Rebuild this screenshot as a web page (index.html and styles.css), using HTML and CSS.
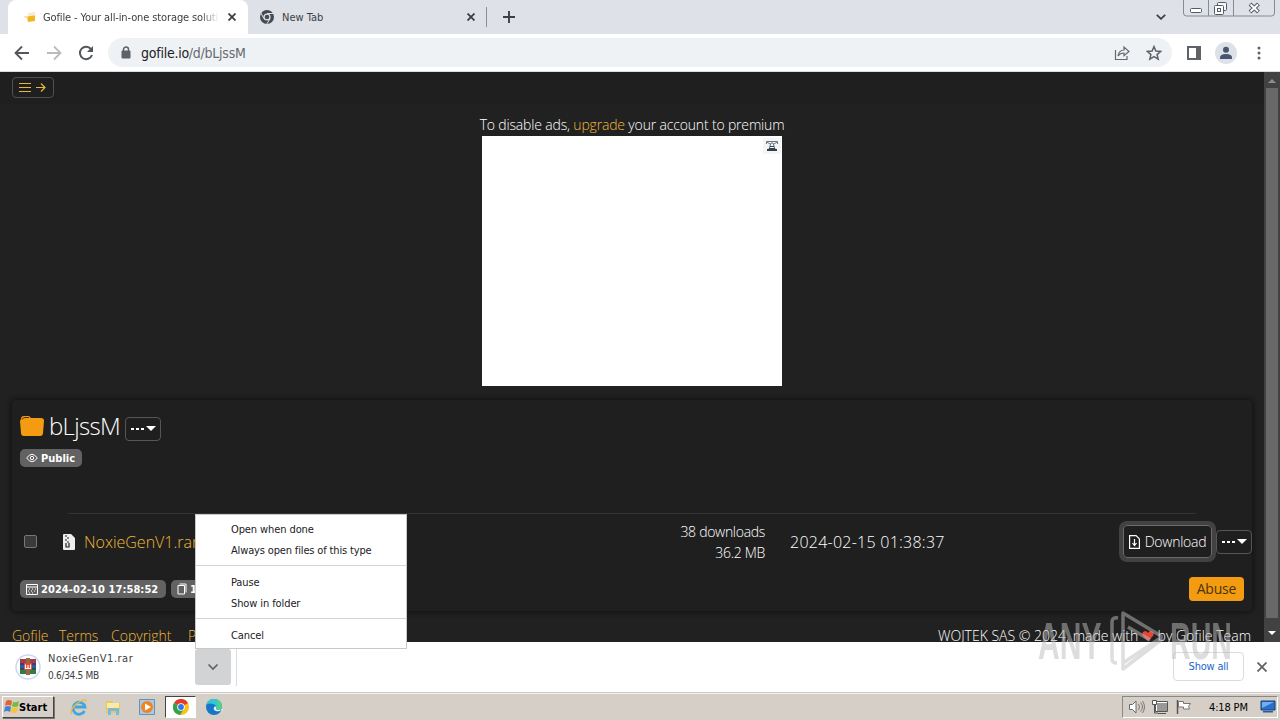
FILE: index.html
```html
<!DOCTYPE html>
<html lang="en">
<head>
<meta charset="UTF-8">
<meta name="viewport" content="width=device-width, initial-scale=1.0">
<title>Gofile - Your all-in-one storage solution</title>
<link rel="stylesheet" href="styles.css">
</head>
<body>
<div class="tabstrip">
    <div class="tab active">
        <svg class="favicon" viewBox="0 0 16 16" width="16" height="16"><path d="M5 4l7-1v5H5z" fill="#f6ead0"/><path d="M4 7.500l8-1V12l-7 1z" fill="#f2b51d"/><path d="M1 7h4v2H2z" fill="#fbdca0"/></svg>
        <span class="tab-title fade">Gofile - Your all-in-one storage solution</span>
        <svg class="tab-close" viewBox="0 0 8 8" width="8" height="8"><path d="M.5.5l7 7M7.500.5l-7 7" stroke="#3c4043" stroke-width="1.8"/></svg>
    </div>
    <div class="tab">
        <svg class="favicon" viewBox="0 0 16 16" width="16" height="16"><circle cx="8" cy="8" r="7" fill="#454a53"/><circle cx="8" cy="8" r="3.600" fill="#dee1e8"/><circle cx="8" cy="8" r="2.300" fill="#454a53"/><path d="M8 4.500h6.500M5 9.700L1.800 4M11 9.800L7.800 15" stroke="#dee1e8"/></svg>
        <span class="tab-title">New Tab</span>
        <svg class="tab-close" viewBox="0 0 8 8" width="8" height="8"><path d="M.5.5l7 7M7.500.5l-7 7" stroke="#3c4043" stroke-width="1.8"/></svg>
    </div>
    <div class="tab-divider"></div>
    <svg class="new-tab" viewBox="0 0 12 12" width="12" height="12"><path d="M6 0v12M0 6h12" stroke="#3c4043" stroke-width="1.900"/></svg>
    <svg class="tab-search" viewBox="0 0 10 6" width="10" height="6"><path d="M.8.8L5 4.800 9.200.8" fill="none" stroke="#3c4043" stroke-width="1.800"/></svg>
    <div class="window-buttons">
        <svg viewBox="0 0 92 17" width="92" height="17"><path d="M.5 0v13q0 3 3 3h85q3 0 3-3V0M25.500 0v16M50.500 0v16" fill="none" stroke="#858a94"/><rect x="7.500" y="8.500" width="11" height="4" rx="1" fill="#fff" stroke="#555b65"/><rect x="34.500" y="2.500" width="9" height="8" rx="1" fill="#f6f7f9" stroke="#555b65"/><rect x="31.500" y="5.500" width="9" height="9" rx="1" fill="#fff" stroke="#555b65"/><rect x="34.500" y="8.500" width="3" height="3" fill="none" stroke="#555b65"/><path d="M67 4l8.500 8M75.500 4L67 12" stroke="#555b65" stroke-width="4"/><path d="M67.500 4.500l7.500 7M75 4.500l-7.500 7" stroke="#fff" stroke-width="2"/></svg>
    </div>
</div>

<div class="toolbar">
    <svg class="nav-icon" viewBox="0 0 16 16" width="16" height="16"><path d="M15 8H2M8 1.500L1.500 8 8 14.500" fill="none" stroke="#53565a" stroke-width="1.800"/></svg>
    <svg class="nav-icon" viewBox="0 0 16 16" width="16" height="16"><path d="M1 8h13M8 1.500L14.500 8 8 14.500" fill="none" stroke="#b9bbbe" stroke-width="1.800"/></svg>
    <svg class="nav-icon" viewBox="0 0 16 16" width="16" height="16"><path d="M13.300 4.500A6.200 6.200 0 1 0 14 10" fill="none" stroke="#53565a" stroke-width="2"/><path d="M15 1v6H9z" fill="#53565a"/></svg>
    <div class="omnibox">
        <svg class="lock" viewBox="0 0 10 13" width="10" height="13"><rect y="4.500" x=".5" width="9" height="8" rx="1" fill="#5f6368"/><path d="M2.500 5V3.500a2.500 2.500 0 0 1 5 0V5" fill="none" stroke="#5f6368" stroke-width="1.500"/></svg>
        <span class="url">gofile.io<span class="path">/d/bLjssM</span></span>
        <svg class="share" viewBox="0 0 16 16" width="16" height="16"><path d="M1.500 5v9.500H13V11" fill="none" stroke="#66696e" stroke-width="1.200"/><path d="M4 11q1-6 6-6V2l5 4.500-5 4.300V8Q6 8 4 11z" fill="none" stroke="#66696e" stroke-width="1.200"/></svg>
        <svg viewBox="0 0 16 16" width="16" height="16"><path d="M8 1.600l1.900 4.400 4.800.4-3.600 3.200 1.100 4.600L8 11.700l-4.200 2.500 1.100-4.600L1.300 6.400 6.100 6z" fill="none" stroke="#5f6368" stroke-width="1.500"/></svg>
    </div>
    <svg class="side-panel" viewBox="0 0 14 14" width="14" height="14"><path d="M1 1h12v12H1z" fill="none" stroke="#5f6368" stroke-width="2"/><path d="M9 0h5v14H9z" fill="#5f6368"/></svg>
    <svg class="avatar" viewBox="0 0 22 22" width="22" height="22"><circle cx="11" cy="11" r="11" fill="#dde1e8"/><circle cx="11" cy="7.800" r="3" fill="#4a5570"/><path d="M5 17v-1.500q0-3.500 6-3.500t6 3.500V17z" fill="#4a5570"/></svg>
    <svg class="kebab" viewBox="0 0 4 14" width="4" height="14"><circle cx="2" cy="2" r="1.500" fill="#5f6368"/><circle cx="2" cy="7" r="1.500" fill="#5f6368"/><circle cx="2" cy="12" r="1.500" fill="#5f6368"/></svg>
</div>

<div class="viewport">
    <div class="page">
        <div class="navbar">
            <div class="menu-button">
                <svg viewBox="0 0 30 11" width="30" height="11"><path d="M0 1.500h12M0 5.500h12M0 9.500h12M17 5.500h9M22 1.500l4 4-4 4" fill="none" stroke="#e8b73a" stroke-width="1.200"/></svg>
            </div>
        </div>
        <div class="ads">
            <p class="ads-text">To disable ads, <a>upgrade</a> your account to premium</p>
            <div class="ad">
                <svg viewBox="0 0 18 16" width="18" height="16"><path d="M0 0h18v16H0z" fill="#f3f5f7"/><path d="M3.500 6V3.500h11V6M4 4l3 2M14 4l-3 2M6 11l2-6h2l2 6" fill="none" stroke="#6c7580"/><path d="M4 11h10v2H4z" fill="#33414d"/><path d="M7 8.500h4M6 10.500h6" stroke="#33414d"/></svg>
            </div>
        </div>
        <div class="card">
            <div class="card-title">
                <svg viewBox="0 0 24 20" width="24" height="20"><path d="M1 3q0-3 3-3h5l2 2h10q3 0 3 3l-1 12q0 3-3 3H4q-3 0-3-3L0 5z" fill="#f39c12"/><path d="M2 3.500q1-2 3-2h4" fill="none" stroke="#40300f"/></svg>
                <h1>bLjssM</h1>
                <div class="dots-button"><i></i></div>
            </div>
            <span class="badge public">
                <svg viewBox="0 0 12 10" width="12" height="10"><path d="M.7 5Q6-2.500 11.300 5 6 12.500.7 5z" fill="none" stroke="#fff"/><circle cx="6" cy="5" r="1.700" fill="none" stroke="#fff"/></svg>Public
            </span>
            <hr>
            <div class="file-row">
                <span class="checkbox"></span>
                <svg class="zip" viewBox="0 0 12 16" width="12" height="16"><path d="M1 0h7l4 4v11q0 1-1 1H1q-1 0-1-1V1q0-1 1-1z" fill="#eee"/><path d="M2 2h2M4 4h2M2 6h2M4 8h2M3 9v4h3V9" fill="none" stroke="#222" stroke-width="1.200"/></svg>
                <a class="file-name">NoxieGenV1.rar</a>
                <div class="file-stats">38 downloads<br>36.2 MB</div>
                <div class="file-date">2024-02-15 01:38:37</div>
                <div class="download-button">
                    <svg viewBox="0 0 11 14" width="11" height="14"><path d="M.6.6h6.500l3.300 3.300v9.500H.6zM5.500 4v6M3.500 8l2 2.500 2-2.500" fill="none" stroke="#fff" stroke-width="1.200"/></svg>
                    <span>Download</span>
                </div>
                <div class="dots-button"><i></i></div>
            </div>
            <div class="badge-row">
                <span class="badge date">
                    <svg viewBox="0 0 12 11" width="12" height="11"><path d="M.5.5h11v10H.5zM.5 3h11M3 5h1M6 5h1M9 5h1M2 7h1M5 7h1M8 7h1M3 9h1M6 9h1" fill="none" stroke="#fff"/></svg>2024-02-10 17:58:52
                </span>
                <span class="badge count">
                    <svg viewBox="0 0 10 12" width="10" height="12"><path d="M2.500 1h6.500v8.500M1 2.500h6.500V11H1z" fill="none" stroke="#fff"/></svg>1 files
                </span>
                <span class="abuse">Abuse</span>
            </div>
        </div>
        <div class="footer">
            <a class="f1">Gofile</a><a class="f2">Terms</a><a class="f3">Copyright</a><a>Privacy</a>
            <span class="credits">WOJTEK SAS © 2024, made with <svg viewBox="0 0 12 10" width="12" height="10"><path d="M6 10L1 5Q-1 1 3 0q2 0 3 2 1-2 3-2 4 1 2 5z" fill="#e74536"/></svg> by Gofile Team</span>
        </div>
    </div>
    <div class="scrollbar">
        <svg viewBox="0 0 16 16" width="16" height="16"><path d="M4 11l4-4 4 4z" fill="#8f8f8f"/></svg>
        <div class="thumb"></div>
        <svg viewBox="0 0 16 24" width="16" height="24"><path d="M4 13h8l-4 4z" fill="#fff"/></svg>
    </div>
</div>

<div class="shelf">
    <svg class="rar" viewBox="0 0 26 26" width="26" height="26"><circle cx="13" cy="13" r="12" fill="#fff" stroke="#c9d8f2" stroke-width="1.500"/><path d="M5 5h16v5H5z" fill="#a33b52"/><path d="M5 10h16v5H5z" fill="#3158a4"/><path d="M5 15h16v5H5z" fill="#327e43"/><path d="M11 4h4v17h-4z" fill="#9b673c"/><path d="M5 10h16M5 15h16" stroke="#302e44"/><path d="M9 9h8v7H9z" fill="#d94a35"/><path d="M10.500 10.500v4h5v-4M13 11v3" fill="none" stroke="#fff" stroke-width="1.200"/></svg>
    <div class="download-text">
        <div class="download-name">NoxieGenV1.rar</div>
        <div class="download-size">0.6/34.5 MB</div>
    </div>
    <div class="shelf-arrow"><svg viewBox="0 0 12 8" width="12" height="8"><path d="M1.500 1.500L6 6l4.500-4.500" fill="none" stroke="#5f6368" stroke-width="1.700"/></svg></div>
    <div class="shelf-divider"></div>
    <div class="show-all">Show all</div>
    <svg class="shelf-close" viewBox="0 0 10 10" width="10" height="10"><path d="M.5.5l9 9M9.500.5l-9 9" stroke="#5f6368" stroke-width="1.800"/></svg>
</div>

<div class="taskbar">
    <div class="start">
        <svg viewBox="0 0 16 16" width="16" height="16"><path d="M3 2q3-2 6 0L8 7Q5 5 2 7z" fill="#e5612f"/><path d="M10 3q3 1 6-1l-1 5q-3 2-6 0z" fill="#76b943"/><path d="M2 8q3-2 6 0l-1 5q-3-2-6 0z" fill="#4382d2"/><path d="M9 8q3 2 6 0l-1 5q-3 2-6 0z" fill="#f6c533"/></svg>Start
    </div>
    <div class="quick">
        <svg viewBox="0 0 18 18" width="18" height="18"><path d="M14.500 13A6 6 0 1 1 15 9H5" fill="none" stroke="#42a6dd" stroke-width="2.800"/><path d="M2 16Q-1 12 7 5.500 16-1 16 4" fill="none" stroke="#edbb45" stroke-width="1.300"/></svg>
        <svg viewBox="0 0 18 18" width="18" height="18"><path d="M2 3h6l1 2h7v10H2z" fill="#e9c862"/><path d="M3 5h12v5H3z" fill="#faeaa4"/><path d="M4 10h11v7h-3v-4H7v4H4z" fill="#79b9d9"/></svg>
        <svg viewBox="0 0 18 18" width="18" height="18"><path d="M1.500 1.500h15v15h-15z" fill="#a9cae6" stroke="#5f94c0"/><circle cx="9" cy="9" r="6" fill="#ef8421"/><path d="M7 5.500l6 3.500-6 3.500z" fill="#fff"/></svg>
        <div class="task-active"><svg viewBox="0 0 16 16" width="16" height="16"><circle cx="8" cy="8" r="8" fill="#fbc116"/><path d="M8 8L1 4a8 8 0 0 1 14 0z" fill="#e33b2e"/><path d="M8 8L1 4a8 8 0 0 0 6 12l4-6z" fill="#31a350"/><circle cx="8" cy="8" r="3.800" fill="#fff"/><circle cx="8" cy="8" r="2.900" fill="#3477e4"/></svg></div>
        <svg viewBox="0 0 18 18" width="18" height="18"><circle cx="9" cy="9" r="8" fill="#1676c8"/><path d="M1.500 6.500A8 8 0 0 1 17 8q0 4-4 4l-2-1q1-4-3-5-3-1-6.500.5z" fill="#36c5d1"/><path d="M11 1.500q6 2 6 7 0 3-3 3.500l-3-1q3-4 0-9.500z" fill="#56cf86"/><path d="M10 8q-3 4 1 5 3 1 5-1l1.500 1-1 2L18 11l-4 1q-3 0-3-1.500 1-1-1-2.500z" fill="#eaf7fb"/></svg>
    </div>
    <div class="tray">
        <svg viewBox="0 0 18 16" width="18" height="16"><path d="M1.500 5.500h3L8 2v12l-3.500-3.500h-3z" fill="#fff" stroke="#696969"/><path d="M10.500 5q2 3 0 6M12.500 3.500q4 4.500 0 9M14.500 2q4 6 0 12" fill="none" stroke="#777"/></svg>
        <svg viewBox="0 0 18 16" width="18" height="16"><path d="M4.500 3.500h11v9h-11z" fill="#999" stroke="#fff"/><path d="M3.500 2.500h12v10h-12zM6 14.500h8M2.500 6v8H6" fill="none" stroke="#555"/><path d="M.5 1.500h4v4h-4z" fill="#fff" stroke="#555"/></svg>
        <svg viewBox="0 0 18 16" width="18" height="16"><path d="M1.500 1v14" stroke="#555" stroke-width="1.500"/><path d="M2.500 2.500h5v2h7l-2 3 1 2.500h-6V8h-5z" fill="#fff" stroke="#777"/></svg>
        <span class="clock">4:18 PM</span>
        <svg viewBox="0 0 16 14" width="16" height="14"><path d="M1 1h14v9H1z" fill="#2870c9" stroke="#173f7c"/><path d="M2 2h12L2 8z" fill="#74aef0"/><path d="M3 11h10v1.500H3z" fill="#31599a"/></svg>
    </div>
</div>

<!-- download item menu, opens above the shelf -->
<div class="context-menu">
    <div class="group"><div class="item">Open when done</div><div class="item wide">Always open files of this type</div></div>
    <div class="group"><div class="item">Pause</div><div class="item">Show in folder</div></div>
    <div class="group"><div class="item">Cancel</div></div>
</div>

<div class="watermark">
    <div class="any"><span>ANY</span></div>
    <svg viewBox="0 0 60 64" width="60" height="64"><path d="M15 3l38 23v4L15 59V3zM10 8q-6-1-6 4v37q0 4 5 4M20 17l22 13M15 59v-6l36-24" fill="none" stroke="#bebebe" stroke-width="3.500" stroke-linejoin="round"/></svg>
    <div class="run"><span>RUN</span></div>
</div>
</body>
</html>
```
FILE: styles.css
```css
* {
    box-sizing: border-box;
}
body {
    margin: 0;
    width: 1280px;
    height: 720px;
    overflow: hidden;
    position: relative;
    display: flex;
    flex-direction: column;
    font-family: "DejaVu Sans Condensed", "DejaVu Sans", sans-serif;
    font-stretch: condensed;
    font-size: 11px;
    white-space: nowrap;
}
svg {
    display: block;
    flex: none;
}

/* browser */
.tabstrip {
    height: 34px;
    flex: none;
    display: flex;
    align-items: center;
    background: #dee1e8;
}
.tab {
    width: 238px;
    height: 34px;
    display: flex;
    align-items: center;
    padding: 0 11px 0 11px;
    color: #3c4043;
}
.tab.active {
    width: 240px;
    margin-left: 8px;
    padding: 0 12px 0 15px;
    background: #fff;
    border-radius: 8px 8px 0 0;
}
.favicon {
    margin-right: 7px;
}
.tab.active .favicon {
    margin-right: 4px;
}
.tab-title {
    flex: 1;
    overflow: hidden;
    margin-right: 9px;
}
.fade {
    letter-spacing: -0.12px;
    -webkit-mask-image: linear-gradient(to right, #000 90%, transparent);
    mask-image: linear-gradient(to right, #000 90%, transparent);
}
.tab-divider {
    width: 1px;
    height: 20px;
    background: #8a8d93;
}
.new-tab {
    margin-left: 16px;
}
.tab-search {
    margin-left: auto;
    margin-right: 17px;
}
.window-buttons {
    width: 97px;
    align-self: flex-start;
}
.toolbar {
    height: 38px;
    flex: none;
    display: flex;
    align-items: center;
    background: #fff;
    border-bottom: 1px solid #d9dce0;
    padding-left: 14px;
}
.nav-icon {
    margin-right: 16px;
}
.omnibox {
    width: 1064px;
    height: 29px;
    margin-left: -2px;
    display: flex;
    align-items: center;
    background: #eff2f5;
    border-radius: 15px;
    padding: 0 10px 0 13px;
}
.url {
    flex: 1;
    margin-left: 10px;
    font-size: 14px;
    letter-spacing: -0.25px;
    color: #202124;
}
.path {
    color: #676a6f;
}
.share {
    margin-right: 16px;
}
.side-panel {
    margin-left: 15px;
}
.avatar {
    margin-left: 14px;
}
.kebab {
    margin-left: 20px;
}

/* gofile */
.viewport {
    height: 570px;
    flex: none;
    display: flex;
    color: #fff;
    background: #212121;
    font-family: "Open Sans", sans-serif;
    font-stretch: normal;
    font-weight: 300;
    font-size: 14px;
}
.page {
    width: 1264px;
    overflow: hidden;
}
.page a {
    color: #f0b838;
}
.navbar {
    height: 32px;
    padding: 5px 12px;
    background: #1f1f1f;
}
.menu-button {
    width: 42px;
    height: 21px;
    display: flex;
    align-items: center;
    padding-left: 6px;
    border: 1px solid #505050;
    border-radius: 4px;
}
.ads {
    display: flex;
    flex-direction: column;
    align-items: center;
    padding-top: 10px;
}
.ads-text {
    margin: 0 0 1px;
    line-height: 21px;
    letter-spacing: -0.17px;
}
.ad {
    width: 300px;
    height: 250px;
    display: flex;
    justify-content: flex-end;
    padding: 2px 1px;
    background: #fff;
}
.card {
    width: 1240px;
    height: 211px;
    margin: 14px 0 0 12px;
    padding: 13px 0 0 8px;
    background: #1f1f1f;
    border-radius: 4px;
    box-shadow: 0 0 5px 1px #111;
}
.card-title {
    display: flex;
    align-items: center;
    height: 26px;
}
.card-title h1 {
    margin: 0 5px 0 5px;
    width: 71px;
    font-size: 24px;
    font-weight: 300;
    line-height: 26px;
    letter-spacing: -0.7px;
}
.card-title .dots-button {
    margin-top: 5px;
}
.dots-button {
    width: 36px;
    height: 24px;
    flex: none;
    display: flex;
    align-items: center;
    justify-content: center;
    gap: 2px;
    border: 1px solid #565656;
    border-radius: 4px;
}
.dots-button i {
    width: 13px;
    height: 2px;
    background: repeating-linear-gradient(to right, #fff 0 3px, transparent 3px 5px);
}
.dots-button::after {
    content: "";
    border: 5px solid transparent;
    border-top: 5px solid #fff;
    border-bottom: 0;
}
.badge {
    height: 18px;
    display: flex;
    align-items: center;
    gap: 3px;
    padding: 0 6px;
    background: #626262;
    border-radius: 5px;
    font-family: "DejaVu Sans Condensed", "DejaVu Sans", sans-serif;
    font-stretch: condensed;
    font-weight: 700;
    font-size: 11px;
}
.public {
    width: 62px;
    margin-top: 10px;
}
hr {
    margin: 46px 56px 0 48px;
    border: 0;
    border-top: 1px solid #343434;
}
.file-row {
    height: 57px;
    display: flex;
    align-items: center;
    margin-top: -1px;
    font-size: 16px;
}
.checkbox {
    width: 13px;
    height: 13px;
    margin-left: 4px;
    border: 1px solid #777;
    border-radius: 2px;
    background: #3a3a3a;
}
.zip {
    margin-left: 26px;
}
.file-name {
    margin-left: 9px;
}
.file-stats {
    margin-left: auto;
    font-size: 14px;
    line-height: 21px;
    text-align: right;
    letter-spacing: -0.3px;
}
.file-date {
    width: 155px;
    margin-left: 25px;
    margin-right: 178px;
    letter-spacing: 0.25px;
}
.download-button {
    width: 89px;
    height: 33px;
    margin-right: 4px;
    display: flex;
    align-items: center;
    justify-content: center;
    gap: 5px;
    font-size: 14px;
    letter-spacing: -0.25px;
    border: 1px solid #6b6b6b;
    border-radius: 4px;
    box-shadow: 0 0 0 4px #424242;
}
.badge-row {
    display: flex;
    align-items: center;
    height: 24px;
    margin-top: 7px;
}
.date {
    width: 146px;
    margin-right: 5px;
    letter-spacing: 0.07px;
}
.count {
    width: 70px;
}
.abuse {
    width: 55px;
    height: 24px;
    margin-left: auto;
    margin-right: 8px;
    line-height: 24px;
    text-align: center;
    letter-spacing: -0.2px;
    font-weight: 400;
    color: #4a3208;
    background: #f39c12;
    border-radius: 4px;
}
.footer {
    display: flex;
    margin-top: 15px;
    padding: 0 13px 0 12px;
    line-height: 20px;
}
.f1 {
    width: 47px;
}
.f2 {
    width: 52px;
}
.f3 {
    width: 77px;
}
.credits {
    margin-left: auto;
}
.credits svg {
    display: inline-block;
}
.scrollbar {
    width: 16px;
    display: flex;
    flex-direction: column;
    background: #424242;
}
.thumb {
    flex: 1;
    margin: 0 2px;
    background: #686868;
}

/* download shelf */
.shelf {
    height: 51px;
    flex: none;
    display: flex;
    background: #fff;
    border-bottom: 1px solid #c9c9c9;
}
.rar {
    margin: 12px 7px 0 15px;
}
.download-text {
    width: 147px;
    padding-top: 9px;
    color: #3c4043;
}
.download-name {
    line-height: 16px;
    letter-spacing: 0.5px;
}
.download-size {
    font-size: 10px;
    line-height: 17px;
    letter-spacing: -0.3px;
}
.shelf-arrow {
    width: 36px;
    height: 36px;
    margin-top: 7px;
    display: flex;
    align-items: center;
    justify-content: center;
    background: #d2d3d5;
    border-radius: 3px;
}
.shelf-divider {
    width: 1px;
    height: 38px;
    margin: 6px 0 0 5px;
    background: #dadce0;
}
.show-all {
    width: 71px;
    height: 29px;
    margin: 10px 13px 0 auto;
    border: 1px solid #dadce0;
    border-radius: 4px;
    color: #1967c8;
    line-height: 27px;
    text-align: center;
    letter-spacing: -0.2px;
}
.shelf-close {
    margin: 20px 13px 0 0;
}

/* windows taskbar */
.taskbar {
    height: 27px;
    display: flex;
    align-items: center;
    background: #d5cfc7;
    border-top: 1px solid #f4f2ee;
}
.start {
    width: 52px;
    height: 22px;
    margin-left: 2px;
    display: flex;
    align-items: center;
    border: 1px solid;
    border-color: #fff #444 #444 #fff;
    box-shadow: 1px 1px 0 #777;
    font-weight: 700;
}
.quick {
    display: flex;
    align-items: center;
    gap: 16px;
    margin-left: 16px;
}
.task-active {
    width: 31px;
    height: 22px;
    display: flex;
    align-items: center;
    justify-content: center;
    margin: 0 -7px;
    background: #fff;
    border: 1px solid;
    border-color: #444 #fff #fff #444;
}
.tray {
    width: 156px;
    height: 22px;
    margin-left: auto;
    margin-right: 2px;
    display: flex;
    align-items: center;
    gap: 6px;
    padding-left: 5px;
    border: 1px solid;
    border-color: #888 #fff #fff #888;
}
.clock {
    width: 40px;
    margin-left: 9px;
    margin-right: 5px;
    letter-spacing: -0.15px;
}

/* overlays */
.context-menu {
    position: absolute;
    left: 195px;
    top: 514px;
    width: 212px;
    height: 135px;
    background: #fff;
    border: 1px solid #c8c8c8;
    color: #202124;
}
.group {
    height: 51px;
    padding: 4px 0 0 35px;
    border-bottom: 1px solid #d5d5d5;
}
.group + .group {
    height: 53px;
    padding-top: 6px;
}
.group:last-child {
    height: 28px;
    border-bottom: 0;
}
.item {
    height: 21px;
    line-height: 21px;
    letter-spacing: -0.1px;
}
.wide {
    letter-spacing: -0.15px;
}
.watermark {
    position: absolute;
    left: 1038px;
    top: 610px;
    display: flex;
    align-items: center;
    opacity: 0.5;
    color: #bcbcbc;
    font-family: "Liberation Sans", Arial, sans-serif;
    font-stretch: normal;
    font-weight: 700;
    font-size: 51px;
    line-height: 60px;
}
.any {
    width: 70px;
}
.run {
    width: 62px;
    margin-left: 2px;
}
.watermark span {
    display: inline-block;
    transform: scaleX(0.59);
    transform-origin: left;
}
.watermark .run span {
    transform: scaleX(0.56);
}
```
